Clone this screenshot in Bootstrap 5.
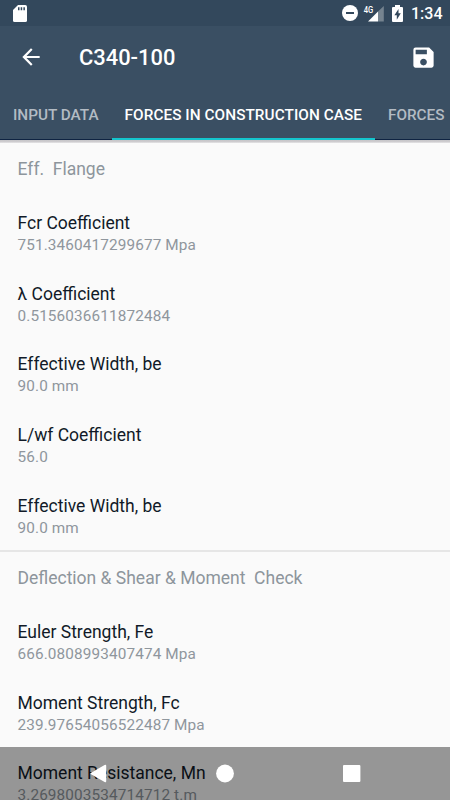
<!DOCTYPE html>
<html lang="en">
<head>
<meta charset="utf-8">
<meta name="viewport" content="width=device-width, initial-scale=1">
<title>C340-100</title>
<link href="https://cdn.jsdelivr.net/npm/bootstrap@5.3.0/dist/css/bootstrap.min.css" rel="stylesheet">
<style>
html, body { height: 100%; overflow: hidden; }
body { font-family: Roboto, "Liberation Sans", sans-serif; background: #fafafa; }
svg { display: block; flex: none; }
.screen { height: 100vh; }
.statusbar { height: 26px; background: #33485c; padding: 0 9px 0 13px; font-size: 16px; font-weight: 500; }
.clock { width: 30px; line-height: 26px; padding-top: 1px; }
.appbar { height: 62px; background: #3a4f63; padding: 0 13px 0 18px; }
.appbar h1 { font-size: 21.9px; font-weight: 500; margin-left: 35px; line-height: 26px; padding-top: 1px; }
.tabs { height: 52px; background: #3a4f63; box-shadow: inset 0 -1px #0f2442; }
.tabs .nav-link { flex: none; height: 52px; line-height: 54px; padding: 0 13px; font-size: 15.32px; font-weight: 500; color: #b3bbc3; border-radius: 0; white-space: nowrap; }
.tabs .nav-link.active { color: #fff; letter-spacing: .06px; box-shadow: inset 0 -2px #14c5cd; }
.edge { height: 3px; background: linear-gradient(#c6c6c9, #cfcdd0 66%, #ececec); flex: none; }
.group-title { height: 55.7px; padding: 15px 17.5px 0; line-height: 22px; font-size: 17.5px; color: #8d959c; white-space: pre; }
.entry { height: 70.65px; padding: 13.5px 17.5px 0; line-height: 22px; }
.entry-name { font-size: 17.5px; color: #111a28; }
.entry-value { font-size: 15.32px; color: #8f969d; letter-spacing: .13px; }
.group + .group { border-top: 2px solid #e6e6e6; margin-top: -1.9px; }
.navkeys { height: 53px; background: rgba(0,0,0,.4); }
</style>
</head>
<body>
<div class="screen d-flex flex-column overflow-hidden position-relative">
  <div class="statusbar d-flex align-items-center text-white flex-shrink-0">
    <svg width="14" height="17" viewBox="0 0 14 17"><path fill="#fff" d="M5 0h7.2Q14 0 14 1.6v13.8Q14 17 12.4 17H1.6Q0 17 0 15.4V5z"/><path fill="#33485c" d="M5 2.3h1.5v3H5zM7.7 2.3h1.5v3H7.7zM10.4 2.3h1.5v3h-1.5z"/></svg>
    <svg class="ms-auto" width="16" height="16" viewBox="0 0 16 16"><circle cx="8" cy="8" r="8" fill="#fff"/><path fill="#33485c" d="M4 7h8v2H4z"/></svg>
    <svg width="21" height="17" viewBox="0 0 21 17" style="margin-left:5px"><path fill="#fff" d="M15 6.5V16.5H5z"/><path fill="#75838f" d="M15 6.5 20.8 1v15.5H15z"/><text x="0.8" y="8" font-family="Roboto, sans-serif" font-size="9" font-weight="500" textLength="9.5" lengthAdjust="spacingAndGlyphs" fill="#fff">4G</text></svg>
    <svg class="ms-2" width="11" height="17" viewBox="0 0 11 17"><path fill="#fff" d="M3 0h5v2h2q1 0 1 1v13q0 1-1 1H1q-1 0-1-1V3q0-1 1-1h2z"/><path fill="#33485c" d="M6.5 4 2.4 10.2h2.4V14.8L8.8 8.3H6.5z"/></svg>
    <span class="clock ms-2">1:34</span>
  </div>
  <div class="appbar d-flex align-items-center text-white flex-shrink-0">
    <svg width="26" height="26" viewBox="0 0 24 24"><path fill="#fff" d="M20 11H7.83l5.59-5.59L12 4l-8 8 8 8 1.41-1.41L7.83 13H20v-2z"/></svg>
    <h1 class="mb-0">C340-100</h1>
    <svg class="ms-auto" width="27" height="27" viewBox="0 0 24 24"><path fill="#fff" d="M17 3H5a2 2 0 0 0-2 2v14c0 1.1.9 2 2 2h14c1.1 0 2-.9 2-2V7l-4-4zm-5 16c-1.66 0-3-1.34-3-3s1.34-3 3-3 3 1.34 3 3-1.34 3-3 3zm3-10H5V5h10v4z"/></svg>
  </div>
  <nav class="tabs nav flex-nowrap flex-shrink-0 overflow-hidden">
    <a class="nav-link" href="#">INPUT DATA</a>
    <a class="nav-link active" href="#">FORCES IN CONSTRUCTION CASE</a>
    <a class="nav-link" href="#">FORCES</a>
  </nav>
  <div class="edge"></div>
  <main>
    <section class="group">
      <div class="group-title">Eff.  Flange</div>
      <div class="entry"><div class="entry-name">Fcr Coefficient</div><div class="entry-value">751.3460417299677 Mpa</div></div>
      <div class="entry"><div class="entry-name">λ Coefficient</div><div class="entry-value">0.5156036611872484</div></div>
      <div class="entry"><div class="entry-name">Effective Width, be</div><div class="entry-value">90.0 mm</div></div>
      <div class="entry"><div class="entry-name">L/wf Coefficient</div><div class="entry-value">56.0</div></div>
      <div class="entry"><div class="entry-name">Effective Width, be</div><div class="entry-value">90.0 mm</div></div>
    </section>
    <section class="group">
      <div class="group-title">Deflection &amp; Shear &amp; Moment  Check</div>
      <div class="entry"><div class="entry-name">Euler Strength, Fe</div><div class="entry-value">666.0808993407474 Mpa</div></div>
      <div class="entry"><div class="entry-name">Moment Strength, Fc</div><div class="entry-value">239.97654056522487 Mpa</div></div>
      <div class="entry"><div class="entry-name">Moment Resistance, Mn</div><div class="entry-value">3.2698003534714712 t.m</div></div>
    </section>
  </main>
  <div class="navkeys position-absolute bottom-0 start-0 w-100">
    <svg width="450" height="53" viewBox="0 0 450 53"><g fill="#fff"><path d="M91.5 25.4 104.6 18q1.6-.8 1.6.8v15.4q0 1.6-1.6.8L91.5 27.6q-2-1.1 0-2.2z"/><circle cx="225" cy="26.5" r="8.9"/><rect x="343" y="18" width="17.4" height="17" rx="1"/></g></svg>
  </div>
</div>
<script src="https://cdn.jsdelivr.net/npm/bootstrap@5.3.0/dist/js/bootstrap.bundle.min.js"></script>
</body>
</html>
